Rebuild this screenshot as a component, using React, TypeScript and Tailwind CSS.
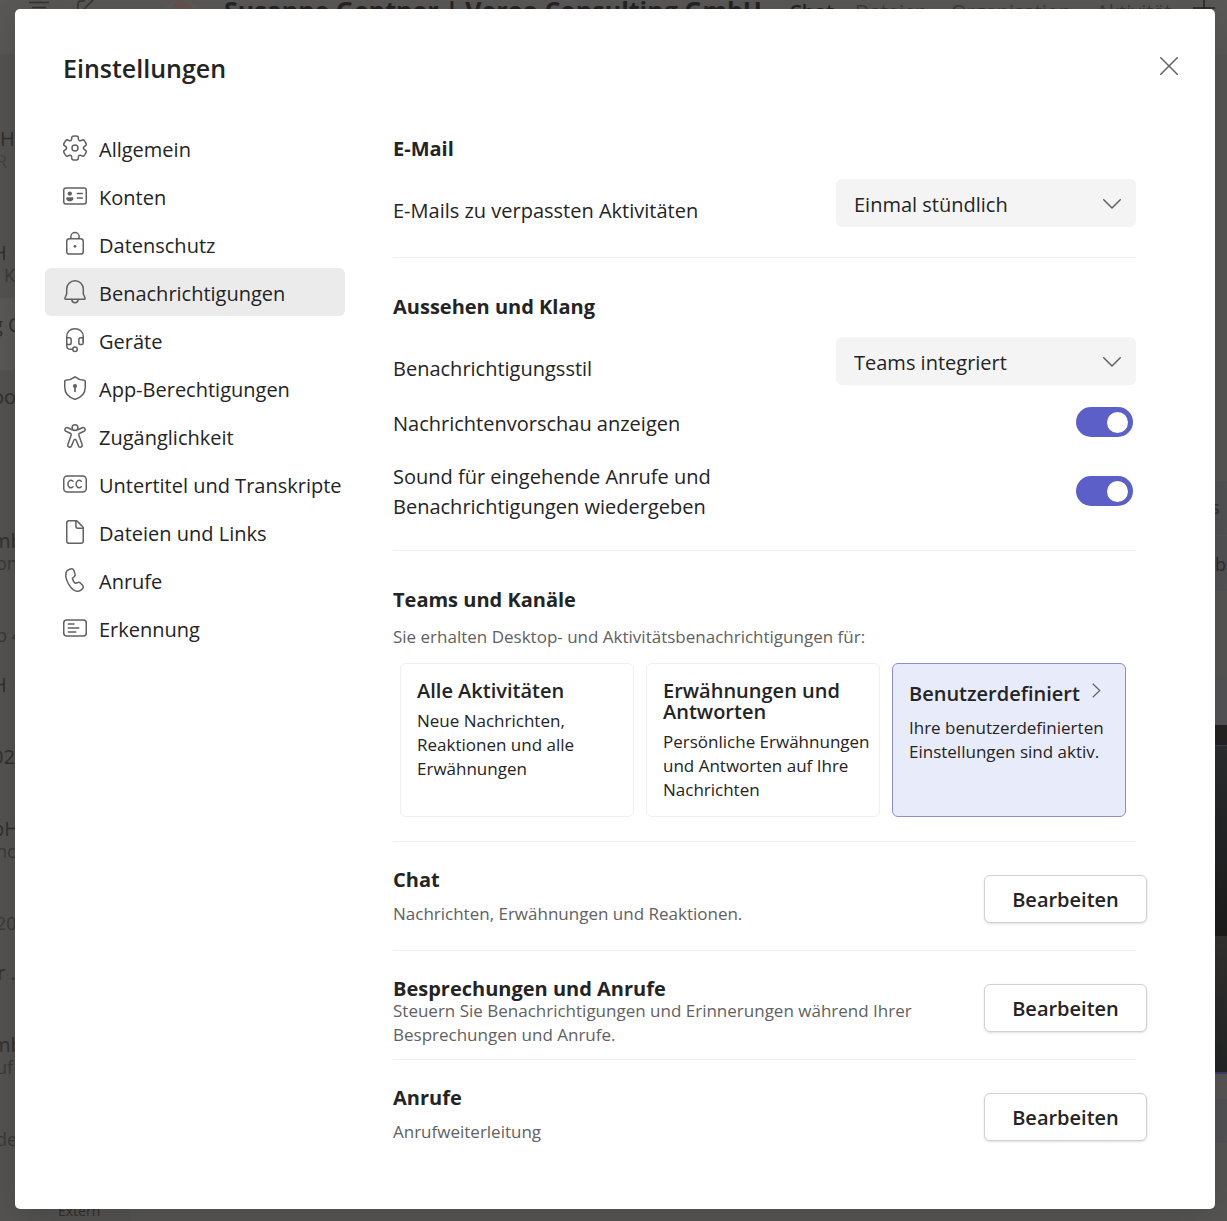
import React from "react";

type NavItem = { label: string; icon: React.ReactNode; active?: boolean };

function Icon({ children }: { children: React.ReactNode }) {
  return (
    <svg
      viewBox="0 0 24 24"
      className="size-6 shrink-0 overflow-visible text-[#616161]"
      fill="none"
      stroke="currentColor"
      strokeWidth="1.5"
      strokeLinecap="round"
      strokeLinejoin="round"
      aria-hidden="true"
    >
      {children}
    </svg>
  );
}

const navItems: NavItem[] = [
  {
    label: "Allgemein",
    icon: (
      <>
        <path
          transform="translate(-2 -2.1) scale(1.4 1.41)"
          strokeWidth="1.07"
          d="M1.91 7.38A8.5 8.5 0 0 1 3.7 4.3a.5.5 0 0 1 .54-.13l1.92.68a1 1 0 0 0 1.32-.76l.36-2a.5.5 0 0 1 .4-.4 8.53 8.53 0 0 1 3.55 0c.2.04.35.2.38.4l.37 2a1 1 0 0 0 1.32.76l1.92-.68a.5.5 0 0 1 .54.13 8.5 8.5 0 0 1 1.78 3.08c.06.2 0 .4-.15.54l-1.56 1.32a1 1 0 0 0 0 1.52l1.56 1.32a.5.5 0 0 1 .15.54 8.5 8.5 0 0 1-1.78 3.08.5.5 0 0 1-.54.13l-1.92-.68a1 1 0 0 0-1.32.76l-.37 2a.5.5 0 0 1-.38.4 8.53 8.53 0 0 1-3.56 0 .5.5 0 0 1-.39-.4l-.36-2a1 1 0 0 0-1.32-.76l-1.92.68a.5.5 0 0 1-.54-.13 8.5 8.5 0 0 1-1.78-3.08.5.5 0 0 1 .15-.54l1.56-1.32a1 1 0 0 0 0-1.52L2.06 7.92a.5.5 0 0 1-.15-.54Z"
        />
        <circle cx="12" cy="12" r="3" />
      </>
    ),
  },
  {
    label: "Konten",
    icon: (
      <>
        <rect x=".75" y="4" width="22.5" height="16" rx="2.2" />
        <circle cx="6.8" cy="9.6" r="2.2" fill="currentColor" stroke="none" />
        <path d="M3.2 14.4c0-.7.5-1.2 1.2-1.2h4.8c.7 0 1.2.5 1.2 1.2 0 1.9-1.6 2.8-3.6 2.8s-3.6-.9-3.6-2.8Z" fill="currentColor" stroke="none" />
        <path d="M14.3 9.6h5M14.3 14.1h5" />
      </>
    ),
  },
  {
    label: "Datenschutz",
    icon: (
      <>
        <rect x="3.75" y="6.75" width="16.5" height="15.3" rx="2.6" />
        <path d="M7.9 6.5V4.6a4.1 4 0 0 1 8.2 0v1.9" />
        <circle cx="12" cy="14.3" r="1.4" fill="currentColor" stroke="none" />
      </>
    ),
  },
  {
    label: "Benachrichtigungen",
    active: true,
    icon: (
      <>
        <path d="M12 .8c-4.8 0-8.3 3.8-8.3 8.3v4.7L1.9 18.2c-.2.5.1 1 .7 1h18.8c.6 0 .9-.5.7-1l-1.8-4.4V9.1C20.3 4.6 16.8.8 12 .8Z" />
        <path d="M8.7 19.4c.2 2 1.5 3.3 3.3 3.3s3.1-1.3 3.3-3.3" />
      </>
    ),
  },
  {
    label: "Geräte",
    icon: (
      <>
        <path d="M3.75 16V8.5C3.75 3.6 7.5.75 12 .75s8.25 2.85 8.25 7.75V14" />
        <path d="M3.75 9.8h2.5c1.1 0 1.9.8 1.9 1.9v3c0 1.1-.8 1.9-1.9 1.9h-2.5M20.25 9.8h-2.5c-1.1 0-1.9.8-1.9 1.9v3c0 1.1.8 1.9 1.9 1.9h.8c1 0 1.7-.8 1.7-1.7V9.8" />
        <path d="M3.75 16v1.7c0 2.2 1.6 3.6 3.7 3.6h2" />
        <circle cx="12" cy="21.2" r="2.3" />
      </>
    ),
  },
  {
    label: "App-Berechtigungen",
    icon: (
      <>
        <path d="M12 .8C14.8 3 17.9 4.1 21.3 4.3c.6 0 .95.4.95.9v6c0 5.5-3.3 9.8-9.9 12a1.1 1.1 0 0 1-.7 0c-6.6-2.2-9.9-6.5-9.9-12v-6c0-.5.35-.9.95-.9C6.1 4.1 9.2 3 12 .8Z" />
        <circle cx="12" cy="10" r="2.1" fill="currentColor" stroke="none" />
        <path d="M12 10.5v4.8" strokeWidth="1.7" />
      </>
    ),
  },
  {
    label: "Zugänglichkeit",
    icon: (
      <>
        <circle cx="12" cy="3.6" r="2.9" />
        <path d="M9.2 5.7 4.7 3.8c-1-.4-2.1 0-2.6.9-.5 1-.1 2.1.9 2.6l4.3 1.9c.7.3 1.1 1 .9 1.8L4.9 20.5c-.3 1.1.2 2.2 1.2 2.5 1 .4 2.1-.2 2.5-1.2l2.2-5.6c.4-1.1 2-1.1 2.4 0l2.2 5.6c.4 1 1.5 1.6 2.5 1.2 1-.3 1.5-1.4 1.2-2.5L15.8 11c-.2-.8.2-1.5.9-1.8L21 7.3c1-.5 1.4-1.6.9-2.6-.5-.9-1.6-1.3-2.6-.9l-4.5 1.9" />
      </>
    ),
  },
  {
    label: "Untertitel und Transkripte",
    icon: (
      <>
        <rect x=".75" y="4" width="22.5" height="16" rx="3.5" />
        <path d="M10 9.3C8.9 8.3 7.3 8.1 6.2 9c-1.7 1.3-1.7 4.8 0 6.1 1.1.9 2.7.7 3.8-.3M18.2 9.3c-1.1-1-2.7-1.2-3.8-.3-1.7 1.3-1.7 4.8 0 6.1 1.1.9 2.7.7 3.8-.3" />
      </>
    ),
  },
  {
    label: "Dateien und Links",
    icon: (
      <>
        <path d="M6 .75h7c.5 0 1 .2 1.4.6l5.3 5.4c.4.4.55.8.55 1.3V21c0 1.3-.9 2.25-2.25 2.25H6A2.2 2.2 0 0 1 3.75 21V3C3.75 1.7 4.7.75 6 .75Z" />
        <path d="M12.9 1v5.3c0 1.1.8 1.9 1.9 1.9H20" />
      </>
    ),
  },
  {
    label: "Anrufe",
    icon: (
      <path d="m7.7 1-1.6.5C4.5 2 3.3 3.3 3 5c-.6 3.3.5 7.6 3.1 11.9 2.5 4.2 5.5 6.5 8.6 6.4 1.5 0 3-.6 4-1.7l1-1.1c.8-.9.8-2.2 0-3.1l-2-2.2c-.7-.7-1.7-1-2.6-.7l-2.7.8c-1.5-1.2-2.6-2.9-3-5l2-1.8c.8-.7 1-1.8.6-2.7L10.9 2.5C10.3 1.2 9 .6 7.7 1Z" />
    ),
  },
  {
    label: "Erkennung",
    icon: (
      <>
        <rect x=".75" y="4" width="22.5" height="16" rx="3" />
        <path d="M5.3 8.1h5.7M5.3 12h10.5M5.3 16h7.5" />
      </>
    ),
  },
];

/* Conversation list that shows at the left edge of the app window. */
const chatRows = [
  { first: "H", second: "K", lit: false },
  { first: "g C", second: "", lit: true },
  { first: "oo", second: "", lit: false },
  { first: "", second: "", lit: false },
  { first: "mb", second: "on", lit: false },
  { first: "", second: "b 4", lit: false },
  { first: "H", second: "", lit: false },
  { first: "02", second: "", lit: false },
  { first: "bH", second: "nc", lit: false },
  { first: "", second: "20", lit: false },
  { first: "\u00a0r .", second: "", lit: false },
  { first: "mb", second: "uf e", lit: false },
  { first: "", second: "de", lit: false },
];

function AppBehind() {
  return (
    <div aria-hidden="true" className="absolute inset-0 flex flex-col overflow-hidden bg-[#575553]">
      <div className="flex h-[54px] shrink-0 items-start overflow-hidden whitespace-nowrap bg-[#5a5856] text-[#3b3a39]">
        <svg viewBox="0 0 100 30" className="ml-7 h-[30px] w-[100px] shrink-0" fill="none" stroke="#343332" strokeWidth="1.5">
          <path d="M1 2.5h20M4 7.5h14M57 1h-4a3 3 0 0 0-3 3v12M56 9 68-3" />
        </svg>
        <div className="ml-8 size-11 shrink-0 overflow-hidden rounded-full bg-[#5d5b59]">
          <div className="mx-auto h-6 w-5 rounded-full bg-[#67534d]" />
        </div>
        <span className="-mt-2 ml-5 w-[565px] shrink-0 text-[25px] leading-9 font-bold text-[#252423]">
          Susanne Gentner | Vereo Consulting GmbH
        </span>
        <span className="w-[66px] shrink-0 text-xl leading-6 font-semibold text-[#252423]">Chat</span>
        <span className="w-24 shrink-0 text-xl leading-6">Dateien</span>
        <span className="w-[145px] shrink-0 text-xl leading-6">Organisation</span>
        <span className="w-[97px] shrink-0 text-xl leading-6">Aktivität</span>
        <svg viewBox="0 0 22 22" className="size-[22px] shrink-0" stroke="#252423" strokeWidth="1.5">
          <path d="M11 0v18M0 8h22" />
        </svg>
      </div>
      <div className="flex flex-1 justify-between">
        <div className="w-[130px] bg-[#555351] pt-[58px] text-xl leading-[22px] text-[#31302f]">
          <div className="h-[114px] pt-4">
            <p className="h-[22px]">H</p>
            <p className="-ml-1 h-[22px] text-lg leading-[22px] text-[#444341]">R</p>
          </div>
          {chatRows.map((row, i) => (
            <div key={i} className={row.lit ? "h-[72px] bg-[#5b5957] pt-4" : "h-[72px] pt-4"}>
              <p className="-ml-2 h-[22px]">{row.first}</p>
              <p className={i === 0 ? "ml-1 h-[22px] text-lg leading-[22px] text-[#3b3a38]" : "-ml-1 h-[22px] text-lg leading-[22px] text-[#3b3a38]"}>
                {row.second}
              </p>
            </div>
          ))}
          <p className="mt-[38px] ml-[58px] text-sm leading-[22px] text-[#2f2e2d]">Extern</p>
        </div>
        <div className="w-3 overflow-hidden pt-[427px] text-lg text-[#2f2e2d]">
          <div className="h-[54px] bg-[#525154] pt-3 leading-7">
            <p className="-ml-1">s</p>
          </div>
          <div className="mt-px h-[55px] bg-[#525154] pt-[14px] leading-7">b</div>
          <div className="mt-[87px] h-[47px] bg-[#545355]" />
          <div className="h-[21px] border-b border-[#3d3b66] bg-[#242322]" />
          <div className="h-[190px] bg-linear-to-b from-[#2c2d2f] to-[#1c1c1c]" />
          <div className="h-[138px] border-b-2 border-[#3d3b66] bg-linear-to-b from-[#343130] to-[#232425]" />
          <div className="mt-[25px] h-11 bg-[#525154]" />
        </div>
      </div>
    </div>
  );
}

function Dropdown({ id, value, options }: { id: string; value: string; options: string[] }) {
  return (
    <div className="relative w-[300px] shrink-0">
      <select
        id={id}
        defaultValue={value}
        className="h-12 w-full appearance-none rounded-md bg-[#f4f4f4] pt-[3px] pr-12 pl-[18px] text-xl text-[#242424]"
      >
        {options.map((o) => (
          <option key={o}>{o}</option>
        ))}
      </select>
      <svg
        viewBox="0 0 18 10"
        className="pointer-events-none absolute top-5 right-[15px] h-[10px] w-[18px]"
        fill="none"
        stroke="#616161"
        strokeWidth="1.5"
        strokeLinecap="round"
        strokeLinejoin="round"
        aria-hidden="true"
      >
        <path d="m.75.75 8.25 8.25L17.25.75" />
      </svg>
    </div>
  );
}

function Toggle({ id }: { id: string }) {
  return (
    <input
      id={id}
      type="checkbox"
      role="switch"
      defaultChecked
      className="mr-[3px] flex h-[30px] w-[57px] shrink-0 appearance-none items-center rounded-full bg-[#a0a0a0] px-[5px] before:size-[21px] before:rounded-full before:bg-white checked:justify-end checked:bg-[#5b5fc7]"
    />
  );
}

function SectionTitle({ children }: { children: React.ReactNode }) {
  return <h2 className="text-xl leading-8 font-bold">{children}</h2>;
}

function EditRow({ title, text, tight }: { title: string; text: string; tight?: boolean }) {
  return (
    <section className="flex min-h-[109px] items-start justify-between border-t border-[#f0f0f0] pt-[22px]">
      <div className="max-w-[540px]">
        <SectionTitle>{title}</SectionTitle>
        <p className={tight ? "-mt-[6px] text-[17px] leading-6 text-[#616161]" : "mt-[6px] text-[17px] leading-6 text-[#616161]"}>
          {text}
        </p>
      </div>
      <button
        type="button"
        aria-label={`${title}: Bearbeiten`}
        className="-mr-[11px] mt-[11px] h-12 w-[163px] shrink-0 rounded-md border border-[#d1d1d1] bg-white pt-[2px] text-xl font-semibold shadow-sm"
      >
        Bearbeiten
      </button>
    </section>
  );
}

export default function App() {
  return (
    <div className="relative min-h-screen overflow-hidden pt-[9px] pr-3 pb-3 pl-[15px] font-['Open_Sans',sans-serif] text-[#242424]">
      <AppBehind />
      <div
        role="dialog"
        aria-labelledby="dialog-title"
        className="relative rounded-[5px] bg-white pb-[41px] shadow-[0_8px_40px_rgba(0,0,0,0.15)]"
      >
        <header className="flex h-[115px] items-start justify-between pt-[41px] pr-9 pl-12">
          <h1 id="dialog-title" className="text-[25px] leading-9 font-semibold">
            Einstellungen
          </h1>
          <button type="button" aria-label="Schließen" className="mt-[6px] size-[20px] p-px">
            <svg viewBox="0 0 18 18" className="size-[18px]" stroke="#616161" strokeWidth="1.5" strokeLinecap="round" aria-hidden="true">
              <path d="m.75.75 16.5 16.5M17.25.75.75 17.25" />
            </svg>
          </button>
        </header>

        <div className="flex items-start gap-12 pr-[79px] pl-[30px]">
          <nav aria-label="Einstellungen" className="w-[300px] shrink-0">
            <ul>
              {navItems.map((item) => (
                <li key={item.label}>
                  <button
                    type="button"
                    aria-current={item.active ? "page" : undefined}
                    className={
                      item.active
                        ? "flex h-12 w-full items-center gap-3 rounded-md bg-[#ebebeb] pl-[18px] text-xl whitespace-nowrap"
                        : "flex h-12 w-full items-center gap-3 rounded-md pl-[18px] text-xl whitespace-nowrap"
                    }
                  >
                    <Icon>{item.icon}</Icon>
                    <span className="pt-[3px]">{item.label}</span>
                  </button>
                </li>
              ))}
            </ul>
          </nav>

          <main className="min-w-0 flex-1 pt-[9px]">
            <section className="pb-[30px]">
              <SectionTitle>E-Mail</SectionTitle>
              <div className="mt-[14px] flex items-center justify-between">
                <label htmlFor="mail" className="pt-4 text-xl leading-[30px]">
                  E-Mails zu verpassten Aktivitäten
                </label>
                <Dropdown id="mail" value="Einmal stündlich" options={["Sobald wie möglich", "Einmal stündlich", "Täglich", "Aus"]} />
              </div>
            </section>

            <section className="border-t border-[#f0f0f0] pt-[33px] pb-7">
              <SectionTitle>Aussehen und Klang</SectionTitle>
              <div className="mt-[14px] flex items-center justify-between">
                <label htmlFor="style" className="pt-4 text-xl leading-[30px]">
                  Benachrichtigungsstil
                </label>
                <Dropdown id="style" value="Teams integriert" options={["Teams integriert", "Windows"]} />
              </div>
              <div className="mt-[22px] flex items-center justify-between">
                <label htmlFor="preview" className="pt-1 text-xl leading-[26px]">
                  Nachrichtenvorschau anzeigen
                </label>
                <Toggle id="preview" />
              </div>
              <div className="mt-[23px] flex items-center justify-between">
                <label htmlFor="sound" className="max-w-[340px] pt-[2px] text-xl leading-[30px]">
                  Sound für eingehende Anrufe und Benachrichtigungen wiedergeben
                </label>
                <Toggle id="sound" />
              </div>
            </section>

            <section className="border-t border-[#f0f0f0] pt-[33px] pb-6">
              <SectionTitle>Teams und Kanäle</SectionTitle>
              <p className="mt-[9px] text-[17px] leading-6 text-[#616161]">
                Sie erhalten Desktop- und Aktivitätsbenachrichtigungen für:
              </p>
              <div className="mt-[14px] mr-[10px] ml-[7px] grid min-h-[154px] grid-cols-3 gap-3">
                <button type="button" className="flex flex-col rounded-md border border-[#f0f0f0] pt-4 pr-2 pb-3 pl-4 text-left">
                  <span className="text-xl leading-[21px] font-semibold">Alle Aktivitäten</span>
                  <span className="mt-2 max-w-[180px] text-[17px] leading-6">Neue Nachrichten, Reaktionen und alle Erwähnungen</span>
                </button>
                <button type="button" className="flex flex-col rounded-md border border-[#f0f0f0] pt-4 pr-2 pb-3 pl-4 text-left">
                  <span className="text-xl leading-[21px] font-semibold">Erwähnungen und Antworten</span>
                  <span className="mt-2 text-[17px] leading-6">Persönliche Erwähnungen und Antworten auf Ihre Nachrichten</span>
                </button>
                <button type="button" className="flex flex-col rounded-md border border-[#8b8dd4] bg-[#e8ebfa] pt-4 pr-2 pb-3 pl-4 text-left">
                  <span className="flex items-start gap-3 text-xl leading-7 font-semibold">
                    Benutzerdefiniert
                    <svg viewBox="0 0 9 15" className="mt-[3px] h-[15px] w-[9px] shrink-0" fill="none" stroke="#616161" strokeWidth="1.2" aria-hidden="true">
                      <path d="m.75.75 7 6.75-7 6.75" />
                    </svg>
                  </span>
                  <span className="mt-2 text-[17px] leading-6">Ihre benutzerdefinierten Einstellungen sind aktiv.</span>
                </button>
              </div>
            </section>

            <EditRow title="Chat" text="Nachrichten, Erwähnungen und Reaktionen." />
            <EditRow
              tight
              title="Besprechungen und Anrufe"
              text="Steuern Sie Benachrichtigungen und Erinnerungen während Ihrer Besprechungen und Anrufe."
            />
            <EditRow title="Anrufe" text="Anrufweiterleitung" />
          </main>
        </div>
      </div>
    </div>
  );
}
